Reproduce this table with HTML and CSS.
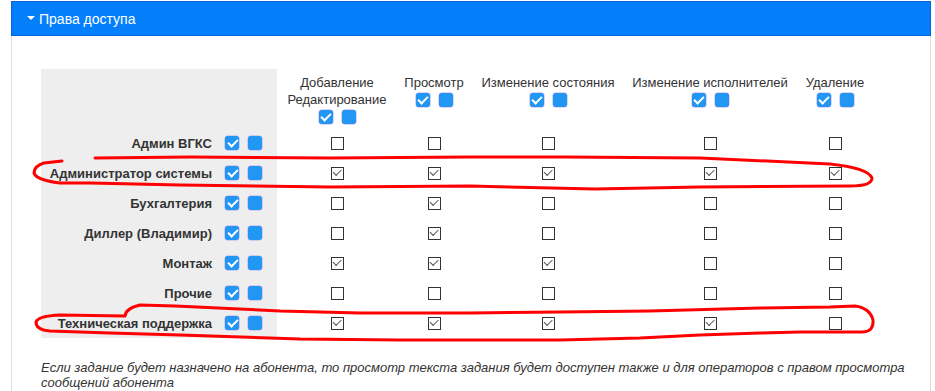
FILE: index.html
```html
<!DOCTYPE html>
<html lang="ru">
<head>
<meta charset="utf-8">
<title>Права доступа</title>
<link rel="stylesheet" href="styles.css">
</head>
<body>
<div class="page">
  <div class="panel">
    <div class="panel-head"><span class="caret"></span><span class="panel-title">Права доступа</span></div>
    <div class="panel-body">
      <div class="grid">
        <div class="cell label-cell head-label"></div>
        <div class="cell head"><div class="htext">Добавление<br>Редактирование</div><div class="pair"><span class="bchk on"></span><span class="bchk"></span></div></div>
        <div class="cell head"><div class="htext">Просмотр</div><div class="pair"><span class="bchk on"></span><span class="bchk"></span></div></div>
        <div class="cell head"><div class="htext">Изменение состояния</div><div class="pair"><span class="bchk on"></span><span class="bchk"></span></div></div>
        <div class="cell head"><div class="htext">Изменение исполнителей</div><div class="pair"><span class="bchk on"></span><span class="bchk"></span></div></div>
        <div class="cell head"><div class="htext">Удаление</div><div class="pair"><span class="bchk on"></span><span class="bchk"></span></div></div>

        <div class="cell label-cell"><span class="lbl">Админ ВГКС</span><span class="bchk on"></span><span class="bchk"></span></div>
        <div class="cell c"><span class="chk"></span></div>
        <div class="cell c"><span class="chk"></span></div>
        <div class="cell c"><span class="chk"></span></div>
        <div class="cell c"><span class="chk"></span></div>
        <div class="cell c"><span class="chk"></span></div>

        <div class="cell label-cell"><span class="lbl">Администратор системы</span><span class="bchk on"></span><span class="bchk"></span></div>
        <div class="cell c"><span class="chk on"></span></div>
        <div class="cell c"><span class="chk on"></span></div>
        <div class="cell c"><span class="chk on"></span></div>
        <div class="cell c"><span class="chk on"></span></div>
        <div class="cell c"><span class="chk on"></span></div>

        <div class="cell label-cell"><span class="lbl">Бухгалтерия</span><span class="bchk on"></span><span class="bchk"></span></div>
        <div class="cell c"><span class="chk"></span></div>
        <div class="cell c"><span class="chk on"></span></div>
        <div class="cell c"><span class="chk"></span></div>
        <div class="cell c"><span class="chk"></span></div>
        <div class="cell c"><span class="chk"></span></div>

        <div class="cell label-cell"><span class="lbl">Диллер (Владимир)</span><span class="bchk on"></span><span class="bchk"></span></div>
        <div class="cell c"><span class="chk"></span></div>
        <div class="cell c"><span class="chk on"></span></div>
        <div class="cell c"><span class="chk"></span></div>
        <div class="cell c"><span class="chk"></span></div>
        <div class="cell c"><span class="chk"></span></div>

        <div class="cell label-cell"><span class="lbl">Монтаж</span><span class="bchk on"></span><span class="bchk"></span></div>
        <div class="cell c"><span class="chk on"></span></div>
        <div class="cell c"><span class="chk on"></span></div>
        <div class="cell c"><span class="chk on"></span></div>
        <div class="cell c"><span class="chk"></span></div>
        <div class="cell c"><span class="chk"></span></div>

        <div class="cell label-cell"><span class="lbl">Прочие</span><span class="bchk on"></span><span class="bchk"></span></div>
        <div class="cell c"><span class="chk"></span></div>
        <div class="cell c"><span class="chk"></span></div>
        <div class="cell c"><span class="chk"></span></div>
        <div class="cell c"><span class="chk"></span></div>
        <div class="cell c"><span class="chk"></span></div>

        <div class="cell label-cell last"><span class="lbl">Техническая поддержка</span><span class="bchk on"></span><span class="bchk"></span></div>
        <div class="cell c"><span class="chk on"></span></div>
        <div class="cell c"><span class="chk on"></span></div>
        <div class="cell c"><span class="chk on"></span></div>
        <div class="cell c"><span class="chk on"></span></div>
        <div class="cell c"><span class="chk"></span></div>
      </div>
      <p class="note">Если задание будет назначено на абонента, то просмотр текста задания будет доступен также и для операторов с правом просмотра сообщений абонента</p>
    </div>
  </div>
  <svg class="marks" width="935" height="391" viewBox="0 0 935 391" fill="none" stroke="#ff0000" stroke-width="3" stroke-linecap="round" stroke-linejoin="round">
    <path d="M95 158 L190 157 L330 158 L470 157 L565 157 L700 158 L830 164 Q868 168 872 178 Q872 186 850 186 L700 187 L595 189 L470 186 L330 187 L180 185 L90 183 L60 183 Q36 180 34 173 Q34 166 44 163 L62 161"/>
    <path d="M125 316 Q126 308 140 305 L175 306 L280 311 L360 313 L470 313 L560 312 L650 311 L760 308 L830 307 L855 306 Q870 308 873 320 Q874 332 862 332 L800 332 L760 333 L700 335 L640 338 L560 340 L400 340 L300 339 L180 335 L110 333 L50 331 Q36 330 36 322 Q38 316 60 315 L125 316"/>
  </svg>
</div>
</body>
</html>
```

FILE: styles.css
```css
* { box-sizing: border-box; }
html, body { margin: 0; padding: 0; background: #fff; }
body {
  font-family: "Liberation Sans", Arial, sans-serif;
  font-size: 13px;
  color: #333;
}
.page {
  position: relative;
  width: 935px;
  height: 391px;
  overflow: hidden;
  padding: 1px 4px 0 11px;
}
.panel { display: flex; flex-direction: column; }
.panel-head {
  height: 35px;
  background: #037ffb;
  border: 1px solid #0a63d6;
  color: #fff;
  display: flex;
  align-items: center;
  padding-left: 15px;
  font-size: 14px;
}
.caret {
  width: 0; height: 0;
  border-left: 4px solid transparent;
  border-right: 4px solid transparent;
  border-top: 4px solid #fff;
  margin-right: 4px;
  margin-top: -1px;
}
.panel-body {
  border-left: 1px solid #ddd;
  border-right: 1px solid #ddd;
  padding: 33px 15px 20px 29px;
}
.grid {
  display: grid;
  grid-template-columns: 236px 120px 74px 154px 170px 80px;
  grid-auto-rows: 30px;
  grid-template-rows: 59px;
}
.cell { display: flex; align-items: center; }
.label-cell {
  background: #eee;
  justify-content: flex-end;
  padding-right: 15px;
}
.lbl { font-weight: bold; margin-right: 13px; }
.label-cell .bchk + .bchk { margin-left: 9px; }
.head {
  flex-direction: column;
  align-items: center;
  justify-content: flex-start;
  padding-top: 5px;
  text-align: center;
  white-space: nowrap;
}
.htext { line-height: 17px; }
.pair { display: flex; gap: 9px; margin-top: 2px; }
.c { justify-content: center; }
.bchk {
  display: inline-block;
  width: 14px; height: 14px;
  border-radius: 3px;
  background: #2196f3;
  box-shadow: 0 0 0 0.5px #b9a4f0;
  position: relative;
}
.bchk.on::after {
  content: "";
  position: absolute;
  left: 2.5px; top: 3px;
  width: 8px; height: 4px;
  border-left: 2.5px solid #fff;
  border-bottom: 2.5px solid #fff;
  transform: rotate(-45deg);
}
.chk {
  display: inline-block;
  width: 13px; height: 13px;
  border: 1.5px solid #333;
  position: relative;
  background: #fff;
}
.chk.on::after {
  content: "";
  position: absolute;
  left: 1.5px; top: 1.5px;
  width: 7px; height: 3.5px;
  border-left: 1.5px solid #555;
  border-bottom: 1.5px solid #555;
  transform: rotate(-45deg);
}
.note {
  margin: 22px 0 0;
  font-style: italic;
  line-height: 15px;
  color: #333;
}
.marks {
  position: absolute;
  top: 0; left: 0;
  pointer-events: none;
}
```
